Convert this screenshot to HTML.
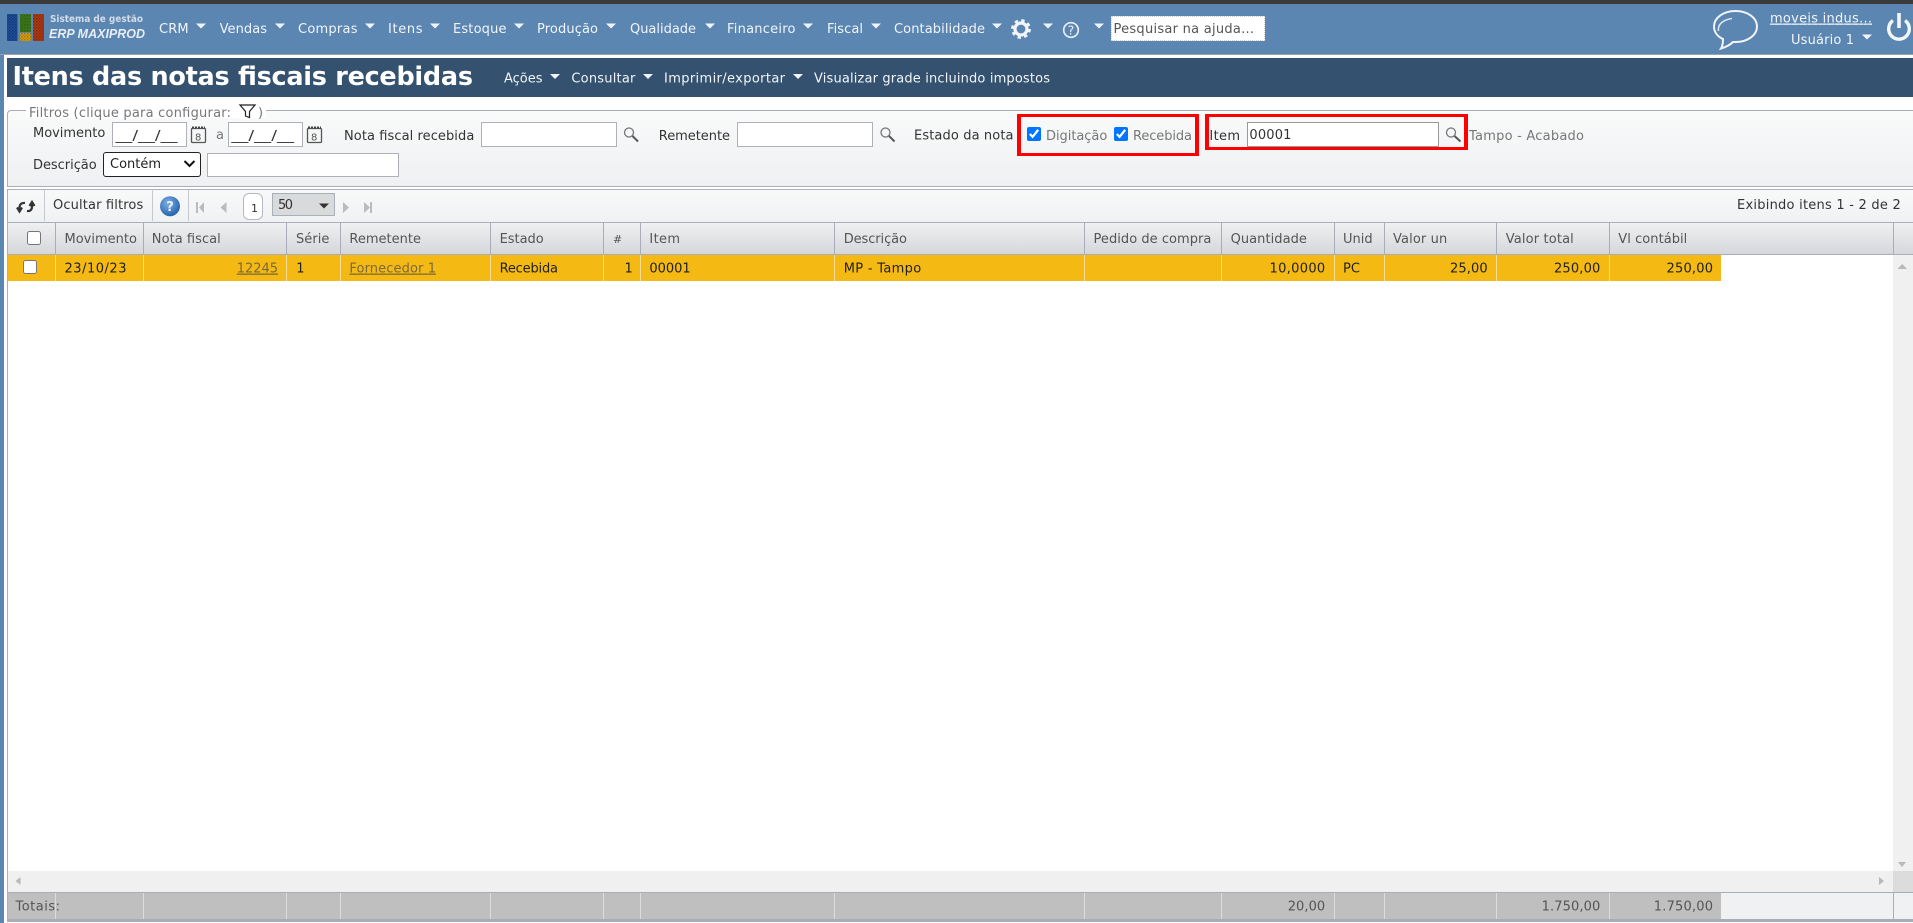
<!DOCTYPE html>
<html lang="pt-BR">
<head>
<meta charset="utf-8">
<title>Itens das notas fiscais recebidas</title>
<style>
html,body{margin:0;padding:0;width:1913px;height:923px;overflow:hidden;background:#fff}
body{position:relative;font-family:"DejaVu Sans","Liberation Sans",sans-serif;font-size:13px;color:#333}
.a{position:absolute;box-sizing:border-box}
input[type=text]{position:absolute;box-sizing:border-box;border:1px solid #aeb1b8;background:#fff;margin:0;padding:0;outline:0}
input[type=checkbox]{position:absolute;margin:0;width:14px;height:14px}
select{position:absolute;box-sizing:border-box;margin:0;font:13px "DejaVu Sans",sans-serif;color:#222;background:#fff;border:1px solid #222;border-radius:3px;padding-left:6px;appearance:none;-webkit-appearance:none}
svg#o{position:absolute;left:0;top:0;pointer-events:none}
svg#o text{font-family:"DejaVu Sans","Liberation Sans",sans-serif;font-size:13px}
.w text{fill:#f1f5f9}
.l text{fill:#333}
.g text{fill:#777}
.h text{fill:#555}
.r text{fill:#222}
</style>
</head>
<body>
<div class="a" style="left:0;top:0;width:1913px;height:4px;background:#3a3a3a"></div>
<div class="a" style="left:0;top:4px;width:1913px;height:50px;background:#5b86b2"></div>
<div class="a" style="left:0;top:54px;width:1913px;height:1px;background:#9fa3a8"></div>
<div class="a" style="left:0;top:55px;width:4px;height:868px;background:#5b86b2"></div>
<div class="a" style="left:7px;top:58px;width:1906px;height:39px;background:#34526f"></div>

<div class="a" style="left:7px;top:110px;width:1906px;height:77px;background:linear-gradient(#f9fafa,#eff0f2);border:1px solid #a9adb8;border-width:1px 0 1px 1px;border-top-left-radius:4px"></div>
<div class="a" style="left:7px;top:189px;width:1906px;height:33px;background:linear-gradient(#f8f9f9,#f0f1f3);border:1px solid #a9adb8;border-width:1px 0 0 1px"></div>
<div class="a" style="left:26px;top:104px;width:240px;height:14px;background:#fff"></div>
<div class="a" style="left:7px;top:222px;width:1906px;height:33px;background:linear-gradient(#eff0f1,#d5d7db);border:1px solid #a9adb8;border-width:1px 0 1px 1px"></div>
<div class="a" style="left:7px;top:255px;width:1714px;height:26px;background:#f5b914"></div>
<div class="a" style="left:7px;top:255px;width:1px;height:665px;background:#a9adb8"></div>
<div class="a" style="left:1893px;top:255px;width:20px;height:616px;background:#f0f0f0"></div>
<div class="a" style="left:8px;top:871px;width:1885px;height:21px;background:#f0f0f0"></div>
<div class="a" style="left:1893px;top:871px;width:20px;height:21px;background:#dcdcdc"></div>
<div class="a" style="left:7px;top:892px;width:1906px;height:1px;background:#a9adb8"></div>
<div class="a" style="left:8px;top:893px;width:1713px;height:26px;background:#bfbfbf"></div>
<div class="a" style="left:1721px;top:893px;width:192px;height:26px;background:#f0f1f3"></div>
<div class="a" style="left:7px;top:919px;width:1906px;height:3px;background:#a9adb8"></div>

<input type="text" style="left:1111px;top:16px;width:154px;height:25px;border:1px dotted #ccc">
<input type="text" style="left:112px;top:122px;width:75px;height:25px">
<input type="text" style="left:228px;top:122px;width:75px;height:25px">
<input type="text" style="left:481px;top:122px;width:136px;height:25px">
<input type="text" style="left:737px;top:122px;width:136px;height:25px">
<input type="text" style="left:1247px;top:122px;width:192px;height:25px;border-color:#999">
<input type="text" style="left:207px;top:153px;width:192px;height:24px">
<select style="left:103px;top:152px;width:98px;height:25px"><option>Contém</option></select>
<input type="checkbox" checked style="left:1027px;top:127px">
<input type="checkbox" checked style="left:1114px;top:127px">
<input type="checkbox" style="left:27px;top:231px">
<input type="checkbox" style="left:23px;top:260px">
<div class="a" style="left:243px;top:193px;width:20px;height:27px;background:#fff;border:1px solid #b5b8be;border-radius:6px"></div>
<div class="a" style="left:272px;top:193px;width:63px;height:23px;background:#d9dadc;border:1px solid #aab0b8"></div>
<div class="a" style="left:1017px;top:114px;width:182px;height:42px;border:solid #f00;border-width:3px 4px"></div>
<div class="a" style="left:1205px;top:114px;width:263px;height:36px;border:solid #f00;border-width:3px 4px"></div>

<svg id="o" width="1913" height="923" viewBox="0 0 1913 923" xmlns="http://www.w3.org/2000/svg">
<defs>
<radialGradient id="b" cx=".4" cy=".35" r=".7"><stop offset="0" stop-color="#7fb0e6"/><stop offset="1" stop-color="#1f5fa8"/></radialGradient>
<pattern id="d" width="3" height="3" patternUnits="userSpaceOnUse"><rect width="1.500" height="1.500" fill="#000" fill-opacity=".28"/><rect x="1.500" y="1.500" width="1.500" height="1.500" fill="#000" fill-opacity=".18"/></pattern>
</defs>
<!-- logo -->
<rect x="7" y="14" width="10.500" height="27" rx="1" fill="#1c4f9c"/>
<rect x="20" y="14" width="11" height="18" rx="1" fill="#3f7d1c"/>
<rect x="20" y="33" width="11" height="8" rx="1" fill="#d9a011"/>
<rect x="33" y="14" width="11" height="27" rx="1" fill="#b23a12"/>
<path fill="url(#d)" d="M7 14h10.500v27H7zM20 14h11v18H20zM20 33h11v8H20zM33 14h11v27H33z"/>
<text x="50" y="22" textLength="93" lengthAdjust="spacingAndGlyphs" style="font:bold 10px 'DejaVu Sans',sans-serif" fill="#d3dce8">Sistema de gestão</text>
<text x="49" y="38" textLength="96" lengthAdjust="spacingAndGlyphs" style="font:italic bold 13px 'Liberation Sans',sans-serif" fill="#e8edf3">ERP MAXIPROD</text>
<!-- nav -->
<g class="w">
<text x="159" y="33" textLength="29.600">CRM</text>
<text x="219.600" y="33" textLength="47.400">Vendas</text>
<text x="298" y="33" textLength="59.500">Compras</text>
<text x="388" y="33" textLength="34.500">Itens</text>
<text x="453" y="33" textLength="53.500">Estoque</text>
<text x="537" y="33" textLength="61">Produção</text>
<text x="630" y="33" textLength="66">Qualidade</text>
<text x="727" y="33" textLength="68.500">Financeiro</text>
<text x="827" y="33" textLength="36">Fiscal</text>
<text x="894" y="33" textLength="91">Contabilidade</text>
<text x="1791" y="44" textLength="63">Usuário 1</text>
<text x="1770" y="22.500" textLength="102" text-decoration="underline">moveis indus...</text>
<text x="504" y="82.500" textLength="38.500">Ações</text>
<text x="571.400" y="82.500" textLength="64">Consultar</text>
<text x="664" y="82.500" textLength="121">Imprimir/exportar</text>
<text x="814" y="82.500" textLength="236">Visualizar grade incluindo impostos</text>
</g>
<path fill="#f1f5f9" d="M196 23.500h10l-5 5zM275 23.500h10l-5 5zM365 23.500h10l-5 5zM430 23.500h10l-5 5zM514 23.500h10l-5 5zM606 23.500h10l-5 5zM705 23.500h10l-5 5zM803 23.500h10l-5 5zM871 23.500h10l-5 5zM992 23.500h10l-5 5zM1043 23.500h10l-5 5zM1094 23.500h10l-5 5zM550 74h10l-5 5zM643 74h10l-5 5zM793 74h10l-5 5zM1862 34.500h10l-5 5z"/>
<!-- gear -->
<circle cx="1021" cy="29" r="6" fill="none" stroke="#f1f5f9" stroke-width="3.200"/>
<circle cx="1021" cy="29" r="8.400" fill="none" stroke="#f1f5f9" stroke-width="3" stroke-dasharray="3.300 3.300"/>
<!-- help -->
<circle cx="1071" cy="30" r="7.300" fill="none" stroke="#e6edf5" stroke-width="1.700"/>
<text x="1071" y="34.500" text-anchor="middle" style="font-size:12.500px" fill="#e6edf5">?</text>
<text x="1113.500" y="33" textLength="140.500" fill="#555">Pesquisar na ajuda...</text>
<!-- bubble -->
<path d="M1735.500 11C1723 11 1714 18 1714 26.500C1714 32 1717.500 36.500 1723 39C1723 43 1722.500 46 1721 48.500C1726 47 1730 45 1733 42C1734 42 1735 42 1735.500 42C1748 42 1757 35 1757 26.500C1757 18 1748 11 1735.500 11Z" fill="none" stroke="#f1f5f9" stroke-width="2"/>
<path d="M1718.500 31C1717.500 25 1722 20 1732 18.500" fill="none" stroke="#dfe8f1" stroke-width="1.500"/>
<!-- power -->
<path d="M1893 20.500A10.300 10.300 0 1 0 1905 20.500" fill="none" stroke="#f4f7fa" stroke-width="3.400"/>
<path d="M1899 13V28" stroke="#f4f7fa" stroke-width="3.600"/>
<!-- title -->
<text x="12.500" y="85" textLength="460.500" style="font-size:25.500px;font-weight:bold" fill="#fff">Itens das notas fiscais recebidas</text>
<!-- filters -->
<g class="g">
<text x="29" y="117" textLength="202">Filtros (clique para configurar:</text>
<text x="258" y="117" textLength="4">)</text>
<text x="216" y="139" textLength="6.500">a</text>
<text x="1046" y="140" textLength="61.300">Digitação</text>
<text x="1133" y="140" textLength="59">Recebida</text>
<text x="1469" y="140" textLength="115" fill="#666">Tampo - Acabado</text>
</g>
<path d="M240 105H255L249.500 111.500V117.500L245.500 116V111.500Z" fill="none" stroke="#222" stroke-width="1.200"/>
<g class="l">
<text x="33" y="137" textLength="72.300">Movimento</text>
<text x="115.500" y="140" textLength="62" lengthAdjust="spacingAndGlyphs" fill="#222">__/__/__</text>
<text x="231.400" y="140" textLength="62.600" lengthAdjust="spacingAndGlyphs" fill="#222">__/__/__</text>
<text x="344" y="140" textLength="130.300">Nota fiscal recebida</text>
<text x="658.800" y="140" textLength="71.200">Remetente</text>
<text x="914" y="139.300" textLength="99.500">Estado da nota</text>
<text x="1209.400" y="140" textLength="30.600">Item</text>
<text x="1249.400" y="139" textLength="42" fill="#222">00001</text>
<text x="33" y="169" textLength="63.700">Descrição</text>
<text x="53" y="209" textLength="90.300">Ocultar filtros</text>
<text x="1737" y="209" textLength="163.800">Exibindo itens 1 - 2 de 2</text>
<text x="251" y="212" textLength="4.500" style="font-size:11px">1</text>
<text x="278" y="209" textLength="15">50</text>
</g>
<!-- select chevron -->
<path d="M184.500 161L189.500 166L194.500 161" fill="none" stroke="#111" stroke-width="2"/>
<!-- calendars -->
<g fill="none" stroke="#555" stroke-width="1.300">
<rect x="191.500" y="128.500" width="14" height="14" rx="1"/>
<rect x="307.500" y="128.500" width="14" height="14" rx="1"/>
</g>
<path d="M192 127.500H205M308 127.500H321" stroke="#444" stroke-width="2" stroke-dasharray="2 1"/>
<text x="195" y="140.500" style="font-size:10px" fill="#555">8</text>
<text x="311" y="140.500" style="font-size:10px" fill="#555">8</text>
<!-- search icons -->
<g fill="none" stroke="#777" stroke-width="1.300">
<circle cx="629" cy="132.500" r="4.500"/><circle cx="885.500" cy="132.500" r="4.500"/><circle cx="1451" cy="132.500" r="4.500"/>
</g>
<path d="M632.500 136L638 141.500M889 136L894.500 141.500M1454.500 136L1460.500 141.500" stroke="#555" stroke-width="2"/>
<!-- toolbar -->
<path d="M44.500 189V221M152.500 189V221M188.500 189V221" stroke="#c5c8cd"/>
<path d="M25 203C21 202.500 19.500 205 19.500 207.500V211M17 207.500L19.500 211.500L22 207.500" fill="none" stroke="#333" stroke-width="2.200"/>
<path d="M27 211C30.500 211.500 32 209.500 32 206.500V202.500M29.500 206L32 202L34.500 206" fill="none" stroke="#333" stroke-width="2.200"/>
<circle cx="170" cy="206.200" r="10" fill="url(#b)"/>
<text x="170" y="211" text-anchor="middle" style="font-size:13px;font-weight:bold" fill="#e8f1fb">?</text>
<path fill="#bbb" d="M196 202h2v11h-2zM204 202v11l-5-5.500zM226.500 202v11l-6-5.500zM343 202l6 5.500-6 5.500zM364 202l6 5.500-6 5.500zM370 202h2v11h-2z"/>
<path fill="#333" d="M319 203.500h10l-5 5z"/>
<!-- grid dividers -->
<path stroke="#a9adb8" d="M55.500 223V254M143.500 223V254M286.500 223V254M340.500 223V254M490.500 223V254M603.500 223V254M640.500 223V254M834.500 223V254M1084.500 223V254M1221.500 223V254M1334.500 223V254M1384.500 223V254M1496.500 223V254M1609.500 223V254M1893.500 223V254M1893.500 893V919"/>
<path stroke="#f9dd96" d="M55.500 255V281M143.500 255V281M286.500 255V281M340.500 255V281M490.500 255V281M603.500 255V281M640.500 255V281M834.500 255V281M1084.500 255V281M1221.500 255V281M1334.500 255V281M1384.500 255V281M1496.500 255V281M1609.500 255V281"/>
<path stroke="#dcdcdc" d="M55.500 893V919M143.500 893V919M286.500 893V919M340.500 893V919M490.500 893V919M603.500 893V919M640.500 893V919M834.500 893V919M1084.500 893V919M1221.500 893V919M1334.500 893V919M1384.500 893V919M1496.500 893V919M1609.500 893V919"/>
<!-- header text -->
<g class="h">
<text x="64.500" y="243" textLength="72.500">Movimento</text>
<text x="151.800" y="243" textLength="69">Nota fiscal</text>
<text x="296" y="243" textLength="33.400">Série</text>
<text x="349.400" y="243" textLength="71.600">Remetente</text>
<text x="499.600" y="243" textLength="44.100">Estado</text>
<text x="613" y="243" textLength="7.400" style="font-size:11px">#</text>
<text x="649.400" y="243" textLength="30.600">Item</text>
<text x="843.700" y="243" textLength="63.300">Descrição</text>
<text x="1093.500" y="243" textLength="117.900">Pedido de compra</text>
<text x="1230.600" y="243" textLength="76.300">Quantidade</text>
<text x="1343" y="243" textLength="29.600">Unid</text>
<text x="1393" y="243" textLength="54.300">Valor un</text>
<text x="1505.700" y="243" textLength="68.100">Valor total</text>
<text x="1618.300" y="243" textLength="69">Vl contábil</text>
</g>
<!-- row text -->
<g class="r">
<text x="64.500" y="272.500" textLength="62">23/10/23</text>
<text x="296.300" y="272.500" textLength="6">1</text>
<text x="499.600" y="272.500" textLength="58.400">Recebida</text>
<text x="624.500" y="272.500" textLength="6">1</text>
<text x="649.400" y="272.500" textLength="41.200">00001</text>
<text x="843.700" y="272.500" textLength="77.500">MP - Tampo</text>
<text x="1269.500" y="272.500" textLength="55.700">10,0000</text>
<text x="1343" y="272.500" textLength="17">PC</text>
<text x="1450" y="272.500" textLength="37.700">25,00</text>
<text x="1554" y="272.500" textLength="46.300">250,00</text>
<text x="1666.500" y="272.500" textLength="46.500">250,00</text>
</g>
<text x="236.700" y="272.500" textLength="41.300" fill="#7a6a3a" text-decoration="underline">12245</text>
<text x="349.400" y="272.500" textLength="86.600" fill="#7a6a3a" text-decoration="underline">Fornecedor 1</text>
<!-- scroll arrows -->
<path fill="#b8b8b8" d="M1897.500 269l4.750-5 4.750 5zM1898 862l4 5 4-5zM20.500 877v8l-5-4zM1879 877v8l5-4z"/>
<!-- totals -->
<g class="h">
<text x="15.500" y="910.500" textLength="44.500">Totais:</text>
<text x="1287.700" y="910.500" textLength="37.500">20,00</text>
<text x="1541.600" y="910.500" textLength="58.700">1.750,00</text>
<text x="1653.800" y="910.500" textLength="59.200">1.750,00</text>
</g>
</svg>
</body>
</html>
